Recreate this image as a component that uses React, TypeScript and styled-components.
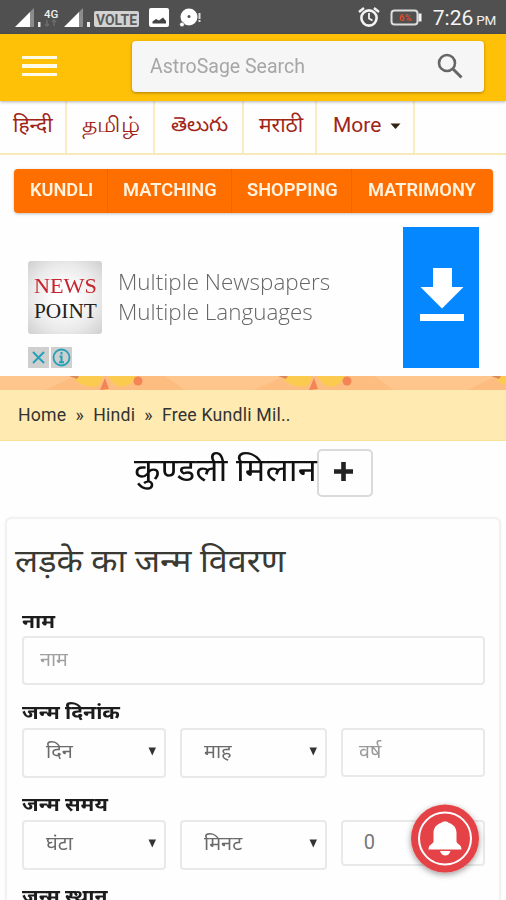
import React from "react";
import styled, { createGlobalStyle } from "styled-components";

const Global = createGlobalStyle`
  * { box-sizing: border-box; }
  html, body { margin: 0; padding: 0; overflow: hidden; background: #fefefe; }
  body { font-family: Roboto, "Noto Sans", sans-serif; color: #111; }
`;

const Page = styled.div`
  width: 506px;
  height: 900px;
  overflow: hidden;
  background: #fefefe;
  display: flex;
  flex-direction: column;
  & > * { flex-shrink: 0; }
`;

/* Text run with a controlled width scale */
const Run = styled.span<{ $size: number; $color?: string; $weight?: number; $sx?: number; $dy?: number; $ls?: number; $family?: string }>`
  display: block;
  white-space: nowrap;
  line-height: 1;
  font-size: ${(p) => p.$size}px;
  font-weight: ${(p) => p.$weight ?? 400};
  color: ${(p) => p.$color ?? "#111"};
  letter-spacing: ${(p) => p.$ls ?? 0}px;
  font-family: ${(p) => p.$family ?? 'Roboto, "Noto Sans", sans-serif'};
  transform-origin: 0 50%;
  transform: translateY(${(p) => p.$dy ?? 0}px) scaleX(${(p) => p.$sx ?? 1});
`;

const StatusBar = styled.div`
  height: 34px;
  background: #505050;
  display: flex;
  justify-content: space-between;
  padding: 0 10px 0 13px;
`;
const Clock = styled.div`
  display: flex;
  align-items: baseline;
  padding-top: 8px;
  gap: 3px;
`;
const StatusRight = styled.div`
  display: flex;
  gap: 10px;
`;

const Header = styled.header`
  height: 67px;
  background: #ffc107;
  display: flex;
  padding: 7px 22px 0;
  justify-content: space-between;
  box-shadow: 0 1px 3px rgba(0, 0, 0, 0.3);
  z-index: 1;
`;
const Burger = styled.div`
  width: 35px;
  padding-top: 15px;
  display: flex;
  flex-direction: column;
  gap: 5px;
`;
const BurgerLine = styled.i`
  height: 3.4px;
  background: #fffbe6;
`;
const Search = styled.div`
  width: 352px;
  height: 51px;
  background: #f6f6f6;
  border-radius: 4px;
  box-shadow: 0 1px 3px rgba(90, 60, 0, 0.5);
  display: flex;
  align-items: center;
  justify-content: space-between;
  padding: 0 21px 2px 18px;
`;

const LangBar = styled.nav`
  height: 54px;
  display: flex;
  border-bottom: 2px solid #f7eab8;
`;
const Lang = styled.div<{ $w: number; $pad: number }>`
  width: ${(p) => p.$w}px;
  padding: 14px 0 0 ${(p) => p.$pad}px;
  border-right: 2px solid #f8edc2;
  display: flex;
  gap: 9px;
`;

const Menu = styled.nav`
  height: 44px;
  margin: 14px 13px 0 14px;
  background: #ff6f00;
  border-radius: 4px;
  box-shadow: 0 1px 3px rgba(0, 0, 0, 0.25);
  display: flex;
`;
const MenuItem = styled.div<{ $w: number; $pad: number }>`
  width: ${(p) => p.$w}px;
  padding: 12px 0 0 ${(p) => p.$pad}px;
  border-right: 1px solid #e96708;
  &:last-child { border: 0; }
`;

const Ad = styled.section`
  height: 163px;
  display: flex;
  padding: 14px 27px 0 28px;
`;
const AdLeft = styled.div`
  width: 90px;
  padding-top: 34px;
`;
const Tile = styled.div`
  width: 74px;
  height: 73px;
  border-radius: 3px;
  background: radial-gradient(circle at 50% 50%, #ffffff 20%, #e9e9e9 65%, #cfcfcf 100%);
  padding: 14px 0 0 6px;
`;
const Badges = styled.div`
  display: flex;
  gap: 2px;
  margin-top: 13px;
`;
const AdCopy = styled.div`
  width: 285px;
  padding-top: 43px;
  display: flex;
  flex-direction: column;
  gap: 8px;
`;
const Download = styled.div`
  width: 76px;
  height: 141px;
  background: #0487ff;
`;

const Pattern = styled.svg`
  display: block;
`;
const Crumbs = styled.div`
  height: 51px;
  background: #ffebb2;
  border-bottom: 1px solid #fbe394;
  padding: 16px 0 0 18px;
`;

const Title = styled.div`
  height: 77px;
  display: flex;
  padding: 8px 0 0 134px;
`;
const TitleText = styled.div`
  width: 183px;
  padding-top: 5px;
`;
const PlusButton = styled.div`
  width: 56px;
  height: 48px;
  border: 2px solid #dadada;
  border-radius: 5px;
  display: flex;
  align-items: center;
  justify-content: center;
  padding-right: 3px;
  padding-bottom: 3px;
`;

const Card = styled.section`
  margin: 0 6px;
  height: 420px;
  border: 1px solid #f0f0f0;
  border-radius: 5px;
  box-shadow: 0 0 3px rgba(0, 0, 0, 0.13);
  background: #fefefe;
  padding: 27px 14px 0 15px;
`;
const CardTitle = styled.div`
  height: 65px;
  margin-left: -7px;
`;
const Label = styled.div<{ $h: number }>`
  height: ${(p) => p.$h}px;
  padding-top: 1px;
`;
const Row = styled.div`
  display: flex;
  gap: 14px;
  height: 66px;
`;
const Field = styled.div<{ $w: number; $h: number; $pad: number }>`
  width: ${(p) => p.$w}px;
  height: ${(p) => p.$h}px;
  border: 2px solid #e9e9e9;
  border-radius: 4px;
  padding: 12px 8px 0 ${(p) => p.$pad}px;
  display: flex;
  justify-content: space-between;
`;
const Caret = styled.svg`
  margin-top: 5px;
`;
const Fab = styled.svg`
  position: absolute;
  left: 401px;
  top: 796px;
`;

const RED = "#a02318";
const langs = [
  { t: "हिन्दी", w: 67, pad: 13, size: 21, sx: 1, dy: 0 },
  { t: "தமிழ்", w: 88, pad: 15, size: 22, sx: 1.08, dy: -1 },
  { t: "తెలుగు", w: 89, pad: 16, size: 20, sx: 1.03, dy: -1 },
  { t: "मराठी", w: 73, pad: 15, size: 21, sx: 1, dy: 0 },
];
const menu = [
  { t: "KUNDLI", w: 94, pad: 16, sx: 1.01 },
  { t: "MATCHING", w: 124, pad: 15, sx: 1.015 },
  { t: "SHOPPING", w: 120, pad: 15, sx: 1.015 },
  { t: "MATRIMONY", w: 141, pad: 16, sx: 1.015 },
];

const Select = ({ text, w }: { text: string; w: number }) => (
  <Field $w={w} $h={50} $pad={22}>
    <Run $size={19} $color="#6a6a6a" $sx={1.05}>{text}</Run>
    <Caret width="8" height="9"><path d="M0.5 .5h7.500l-3.700 8z" fill="#333" /></Caret>
  </Field>
);

const FieldLabel = ({ text, h }: { text: string; h: number }) => (
  <Label $h={h}>
    <Run $size={19} $weight={700} $color="#1c1c1c" $sx={1.115}>{text}</Run>
  </Label>
);

export default function App() {
  return (
    <Page>
      <Global />
      <StatusBar>
        <svg width="200" height="34">
          <path d="M2 27L17 12V27Z" fill="#fff" />
          <path d="M17 12L21 8V27H17Z" fill="#8c8c8c" />
          <path d="M51 27L66 12V27Z" fill="#fff" />
          <path d="M66 12L70 8V27H66Z" fill="#8c8c8c" />
          <rect x="25" y="22" width="2.5" height="5" fill="#eee" />
          <rect x="74" y="22" width="3" height="5" fill="#eee" />
          <text x="31" y="18" fontFamily="Roboto" fontSize="11.5" fontWeight="500" fill="#eee">4G</text>
          <path d="M34 20v6M32 24l2 2l2-2M41 26v-6M39 22l2-2l2 2" stroke="#6c6c6c" fill="none" strokeWidth="1.5" />
          <rect x="81" y="11" width="45" height="16" rx="2" fill="#d2d2d2" />
          <text x="83" y="24.500" fontFamily="Roboto" fontSize="15" fontWeight="700" fill="#5a5a5a" textLength="41" lengthAdjust="spacingAndGlyphs">VOLTE</text>
          <rect x="136" y="8" width="20" height="19" rx="2" fill="#fff" />
          <path d="M139.500 23.500v-2l3.500-2.500l3 1.500l4-3l3 3.500v2.500z" fill="#444" />
          <circle cx="176" cy="17" r="8.500" fill="#fff" />
          <circle cx="176" cy="16.500" r="1.500" fill="#555" />
          <circle cx="169" cy="24.500" r="2.300" fill="#fff" stroke="#505050" strokeWidth=".6" />
          <path d="M186.500 13v6M186.500 20v2" stroke="#ddd" strokeWidth="2" />
        </svg>
        <StatusRight>
          <svg width="65" height="34" fill="none" stroke="#f4f4f4">
            <circle cx="11" cy="18" r="7.600" strokeWidth="2.600" />
            <path d="M11 13v5.500l3.500 2" strokeWidth="1.800" />
            <path d="M1 12l5-4M21 12l-5-4" strokeWidth="2.400" />
            <rect x="33.500" y="10.500" width="26" height="14" rx="3" strokeWidth="2" stroke="#ddd" />
            <path d="M62 13.500v8" strokeWidth="3" />
            <text x="41" y="21" fontFamily="Roboto" fontWeight="700" fontSize="9.500" fill="#e04a28" stroke="none">6%</text>
          </svg>
          <Clock>
            <Run $size={21} $color="#f5f5f5">7:26</Run>
            <Run $size={13.5} $color="#f0f0f0" $ls={-0.3}>PM</Run>
          </Clock>
        </StatusRight>
      </StatusBar>

      <Header>
        <Burger><BurgerLine /><BurgerLine /><BurgerLine /></Burger>
        <Search>
          <Run $size={20} $color="#a6a6a6" $sx={0.975}>AstroSage Search</Run>
          <svg width="26" height="26" fill="none" stroke="#666">
            <circle cx="10" cy="10" r="8" strokeWidth="2.600" />
            <path d="M15.500 15.500L24.500 24.500" strokeWidth="3" />
          </svg>
        </Search>
      </Header>

      <LangBar>
        {langs.map((l) => (
          <Lang key={l.t} $w={l.w} $pad={l.pad}>
            <Run $size={l.size} $color={RED} $sx={l.sx} $dy={l.dy}>{l.t}</Run>
          </Lang>
        ))}
        <Lang $w={98} $pad={16}>
          <Run $size={21} $color={RED}>More</Run>
          <svg width="11" height="20"><path d="M0.500 8.500h10l-5 5.500z" fill="#321" /></svg>
        </Lang>
      </LangBar>

      <Menu>
        {menu.map((m) => (
          <MenuItem key={m.t} $w={m.w} $pad={m.pad}>
            <Run $size={18} $color="#fff3e0" $weight={600} $sx={m.sx}>{m.t}</Run>
          </MenuItem>
        ))}
      </Menu>

      <Ad>
        <AdLeft>
          <Tile>
            <Run $size={22} $color="#c8242e" $sx={1.01} $weight={500} $family='"Liberation Serif", serif'>NEWS</Run>
            <Run $size={22} $color="#222" $sx={0.97} $family='"Liberation Serif", serif' $dy={3}>POINT</Run>
          </Tile>
          <Badges>
            <svg width="21" height="21"><rect width="21" height="21" fill="#cfcfcf" /><path d="M5 5L16 16M16 5L5 16" stroke="#22a2b8" strokeWidth="2" /></svg>
            <svg width="21" height="21"><rect width="21" height="21" fill="#cfcfcf" /><circle cx="10.500" cy="10.500" r="8" stroke="#22a2b8" strokeWidth="1.800" fill="none" /><path d="M10.500 5v2.500M8.500 9.500h2v6M8 15.300h5" stroke="#22a2b8" strokeWidth="2" fill="none" /></svg>
          </Badges>
        </AdLeft>
        <AdCopy>
          <Run $size={22} $color="#666" $weight={300} $sx={1.02} $family='"Open Sans", sans-serif'>Multiple Newspapers</Run>
          <Run $size={22} $color="#666" $weight={300} $sx={1.02} $family='"Open Sans", sans-serif'>Multiple Languages</Run>
        </AdCopy>
        <Download>
          <svg width="76" height="141">
            <path d="M30 41h19v19h11.500L39 81.500L17.500 60H30z" fill="#fff" />
            <rect x="17" y="87" width="44" height="7" fill="#fff" />
          </svg>
        </Download>
      </Ad>

      <Pattern width="506" height="14">
        <rect width="506" height="14" fill="#fec68c" />
        {[-107, 105, 314, 527].map((x) => (
          <g key={x}>
            <path d={`M${x - 60} 14L${x - 30} 0H${x + 60}L${x + 80} 14Z`} fill="#fdbd80" />
            <path d={`M${x - 32} 0Q${x - 28} 10 ${x - 10} 11Q${x - 4} 10 ${x - 2} 0Z`} fill="#fbcb50" />
            <path d={`M${x + 3} 0Q${x + 8} 10 ${x + 18} 11Q${x + 28} 8 ${x + 32} 0Z`} fill="#fbcb50" />
            <path d={`M${x - 5} 14L${x} 2L${x + 4} 13Z`} fill="#f28456" />
            <circle cx={x + 33} cy="5" r="4.500" fill="#f28456" />
            <path d={`M${x - 36} 0l8 3l2-3z`} fill="#d98a5c" />
          </g>
        ))}
      </Pattern>

      <Crumbs>
        <Run $size={17.5} $color="#333" $ls={0.2} $sx={1.01} $dy={0.5}>Home&nbsp; »&nbsp; Hindi&nbsp; »&nbsp; Free Kundli Mil..</Run>
      </Crumbs>

      <Title>
        <TitleText><Run $size={32} $color="#111" $sx={1.075}>कुण्डली मिलान</Run></TitleText>
        <PlusButton>
          <svg width="19" height="19"><path d="M9.500 0v19M0 9.500h19" stroke="#222" strokeWidth="4.600" /></svg>
        </PlusButton>
      </Title>

      <Card>
        <CardTitle><Run $size={32} $color="#3a3a34" $sx={1.068} $dy={-1}>लड़के का जन्म विवरण</Run></CardTitle>
        <FieldLabel text="नाम" h={25} />
        <Row>
          <Field $w={464} $h={49} $pad={16}><Run $size={19} $color="#a0a0a0" $sx={1.04}>नाम</Run></Field>
        </Row>
        <FieldLabel text="जन्म दिनांक" h={26} />
        <Row>
          <Select text="दिन" w={145} />
          <Select text="माह" w={147} />
          <Field $w={145} $h={49} $pad={16}><Run $size={19} $color="#999" $sx={1.03}>वर्ष</Run></Field>
        </Row>
        <FieldLabel text="जन्म समय" h={26} />
        <Row>
          <Select text="घंटा" w={145} />
          <Select text="मिनट" w={147} />
          <Field $w={145} $h={46} $pad={21}><Run $size={20} $color="#777" $dy={-2}>0</Run></Field>
        </Row>
        <FieldLabel text="जन्म स्थान" h={26} />
      </Card>

      <Fab width="88" height="88">
        <defs>
          <filter id="fabShadow" x="-30%" y="-30%" width="160%" height="160%">
            <feDropShadow dx="0" dy="2" stdDeviation="3" floodOpacity="0.4" />
          </filter>
        </defs>
        <circle cx="44" cy="42.500" r="34" fill="#e54347" filter="url(#fabShadow)" />
        <circle cx="44" cy="42.500" r="26" fill="none" stroke="#fff" strokeWidth="2" />
        <path d="M44 25.500c-2 0-3.500 .6-4 1.500c-4.500 1.300-7.500 5-7.500 10v8.500c0 2.500-5 2.500-5 8h33c0-5.500-5-5.500-5-8v-8.500c0-5-3-8.700-7.500-10c-.5-.9-2-1.500-4-1.500z" fill="#fff" />
        <path d="M39 55h10.500c-1 3-2.900 4.500-5.200 4.500s-4.300-1.500-5.300-4.500z" fill="#fff" />
      </Fab>
    </Page>
  );
}
